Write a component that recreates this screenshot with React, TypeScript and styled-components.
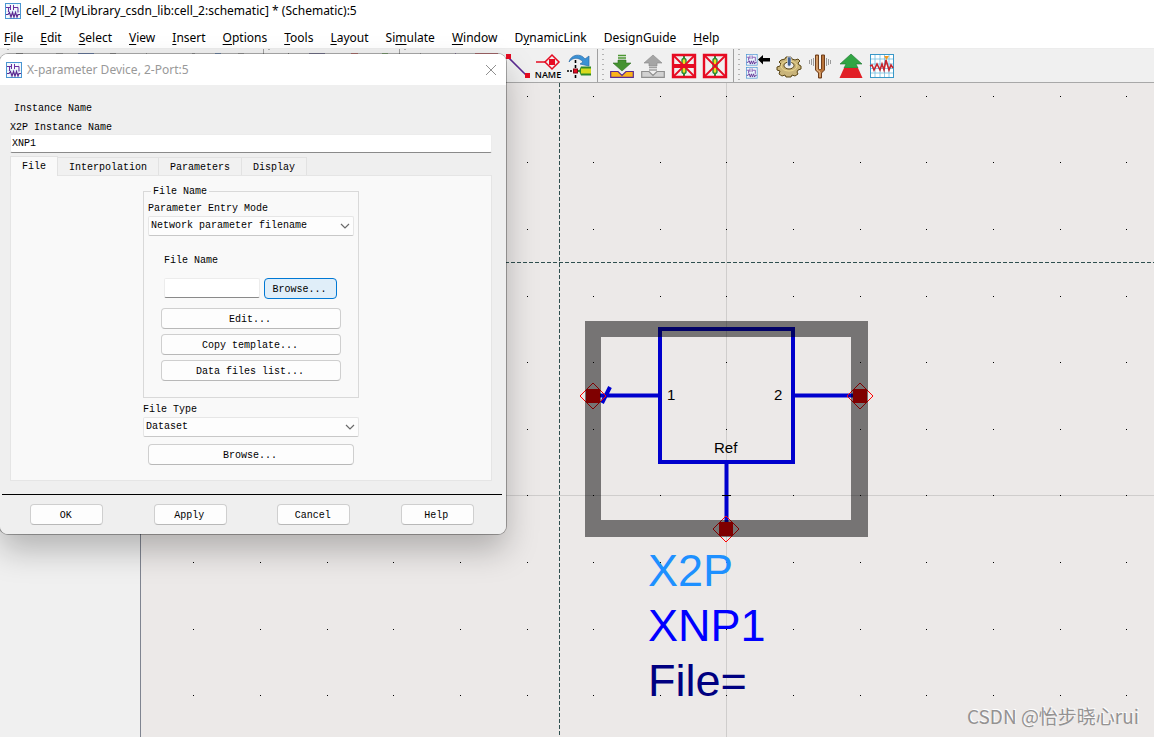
import React, { useState } from "react";
import styled, { createGlobalStyle, css } from "styled-components";

const UI_FONT = '"Noto Sans", "Open Sans", sans-serif';
const FORM_FONT = '"Liberation Mono", monospace';

const GlobalStyle = createGlobalStyle`
  *, *::before, *::after { box-sizing: border-box; }
  body { margin: 0; background: #f0f0f0; color: #000; font-family: ${UI_FONT}; font-size: 12px; }
  button, input, select { font: inherit; color: inherit; margin: 0; }
`;

/* ---------- main window ---------- */

const Window = styled.div`
  position: relative;
  display: flex;
  flex-direction: column;
  min-height: 100vh;
  overflow: hidden;
`;

const TitleBar = styled.header`
  display: flex;
  align-items: center;
  gap: 5px;
  height: 24px;
  padding: 0 5px 3px;
  background: #fff;
`;

const WindowTitle = styled.h1`
  margin: 0;
  font-size: 12px;
  font-weight: 400;
  line-height: 20px;
  white-space: nowrap;
`;

const MenuBar = styled.nav`
  display: flex;
  align-items: center;
  gap: 17px;
  height: 25px;
  padding: 4px 4px 0;
  background: #fff;
  border-bottom: 1px solid #ececec;
`;

const MenuButton = styled.button`
  padding: 0;
  border: 0;
  background: none;
  line-height: 16px;
  white-space: nowrap;

  u { text-underline-offset: 2px; }
`;

const ToolBar = styled.div`
  display: flex;
  height: 34px;
  padding-left: 3px;
  background: #f0f0f0;
  border-bottom: 1px solid #a8a8a8;
`;

const ToolGroup = styled.div<{ $first?: boolean }>`
  display: flex;
  align-items: center;
  gap: 7px;
  padding: 0 6px 0 ${(p) => (p.$first ? 13 : 12)}px;
  border-left: ${(p) => (p.$first ? "0" : "1px solid #a0a0a0")};
  background: radial-gradient(circle, #b4b4b4 1px, transparent 1px) 3px 3px / 4px 5px repeat-y;
`;

const ToolButton = styled.button`
  display: block;
  width: 24px;
  height: 24px;
  padding: 0;
  border: 0;
  background: none;

  svg { display: block; overflow: visible; }
`;

const Workspace = styled.main`
  display: flex;
  flex: 1;
`;

const SidePanel = styled.aside`
  flex: 0 0 141px;
  background: #f0f0f0;
  border-right: 1px solid #7f8490;
`;

const Canvas = styled.section`
  display: flex;
  flex: 1;
  min-width: 0;
  min-height: 600px;
  padding-left: 4px;
  background: #ece9e8;
`;

const Drawing = styled.svg`
  display: block;
  flex: 1;
  min-width: 0;
  font-family: "Liberation Sans", Arial, sans-serif;
`;

const Watermark = styled.div`
  position: absolute;
  right: 15px;
  bottom: 8px;
  font: 400 19px/26px "Noto Sans CJK SC", sans-serif;
  color: #949292;
  text-shadow: 1px -1px 0 #fff;
`;

/* ---------- dialog ---------- */

const Dialog = styled.section`
  position: absolute;
  top: 54px;
  left: 0;
  width: 506px;
  overflow: hidden;
  background: #efefef;
  border-radius: 8px;
  font: 10px/12px ${FORM_FONT};
`;

const DialogShadow = styled.div`
  position: absolute;
  top: 54px;
  left: 0;
  width: 506px;
  height: 480px;
  border-radius: 8px;
  box-shadow: 0 0 0 1px rgba(0, 0, 0, 0.3), 0 16px 32px rgba(0, 0, 0, 0.25);
`;

const DialogHeader = styled.header`
  display: flex;
  align-items: center;
  gap: 5px;
  height: 31px;
  padding: 0 9px 0 6px;
  background: #fff;
`;

const DialogTitle = styled.h2`
  flex: 1;
  margin: 0;
  color: #999;
  font: 400 12px/20px ${UI_FONT};
`;

const CloseButton = styled.button`
  padding: 0;
  border: 0;
  background: none;

  svg { display: block; }
`;

const DialogBody = styled.div`
  padding: 18px 14px 0 10px;
`;

const Caption = styled.p`
  margin: 0 0 7px 4px;
`;

const Label = styled.label`
  display: block;
`;

const fieldSurface = css`
  background: #fff;
  border: 1px solid #ececec;
  border-bottom-color: #8a8a8a;
  border-radius: 2px;
  outline: 0;
`;

const TextInput = styled.input<{ $width?: string }>`
  ${fieldSurface}
  display: block;
  width: ${(p) => p.$width ?? "100%"};
  height: ${(p) => (p.$width ? 20 : 19)}px;
  padding: 0 1px;
`;

const Tabs = styled.div`
  display: flex;
  align-items: flex-end;
  height: 22px;
  padding-top: 3px;
`;

const Tab = styled.button<{ $active?: boolean }>`
  position: relative;
  height: ${(p) => (p.$active ? 20 : 18)}px;
  margin-bottom: ${(p) => (p.$active ? -1 : 0)}px;
  padding: ${(p) => (p.$active ? 0 : 2)}px 11px 0;
  border: 1px solid #e2e2e2;
  border-bottom: 0;
  border-left-width: ${(p) => (p.$active ? 1 : 0)}px;
  background: ${(p) => (p.$active ? "#f9f9f9" : "#f1f1f1")};
`;

const TabPanel = styled.div`
  height: 306px;
  padding: 9px 132px 0;
  background: #f9f9f9;
  border: 1px solid #e5e5e5;
`;

const FileGroup = styled.fieldset`
  min-width: 0;
  height: 213px;
  margin: 0;
  padding: 5px 4px 0;
  border: 1px solid #d9d9d9;
`;

const Legend = styled.legend`
  margin-left: 3px;
  padding: 1px 2px 0;
`;

const SelectBox = styled.div`
  position: relative;
  margin-top: 1px;

  select {
    display: block;
    width: 100%;
    height: 20px;
    padding: 0 20px 0 2px;
    appearance: none;
    background: #fdfdfd;
    border: 1px solid #e6e6e6;
    border-bottom-color: #c8c8c8;
    border-radius: 2px;
  }

  svg {
    position: absolute;
    right: 4px;
    top: 7px;
    pointer-events: none;
  }
`;

const FileNameBlock = styled.div`
  padding: 19px 16px 0;
`;

const FileRow = styled.div`
  display: flex;
  gap: 4px;
  margin-top: 11px;
`;

const PushButton = styled.button<{ $width?: string; $highlight?: boolean }>`
  display: block;
  width: ${(p) => p.$width ?? "100%"};
  height: 21px;
  padding: 3px 2px 0 0;
  border: 1px solid ${(p) => (p.$highlight ? "#0078d4" : "#cfcfcf")};
  border-bottom-color: ${(p) => (p.$highlight ? "#0078d4" : "#b8b8b8")};
  border-radius: 4px;
  background: ${(p) => (p.$highlight ? "#e0eef9" : "#fdfdfd")};
`;

const ButtonStack = styled.div`
  display: grid;
  gap: 5px;
  margin: 9px 13px 0;
`;

const FileTypeBlock = styled.div`
  padding-top: 6px;
`;

const BrowseSlot = styled.div`
  padding: 7px 5px 0;
`;

const Footer = styled.footer`
  display: grid;
  grid-template-columns: repeat(4, 1fr);
  justify-items: center;
  margin: 13px 4px 0 2px;
  padding: 9px 3px;
  border-top: 1px solid #000;
`;

/* ---------- icons ---------- */

const Icon = ({ size = 24, children }: { size?: number; children: React.ReactNode }) => (
  <svg width={size} height={size} viewBox={`0 0 ${size} ${size}`} fill="none" aria-hidden="true">
    {children}
  </svg>
);

const SchematicMark = () => (
  <>
    <rect x=".5" y=".5" width="15" height="15" fill="#f3f8fd" stroke="#4b96d2" />
    <path d="M4.500 1v14M8.500 1v14M12.500 1v14M1 8.500h14" stroke="#dcebf8" />
    <path d="M1 4.500h4M5.500 2v5M8.500 2v5M9 4.500h4v5M3.500 5v4" stroke="#6a2fa0" />
    <path d="M1 11.500h2l1.500-2 1.500 4.500 1.500-4.500 1.500 4.500 1.500-4.500 1.500 4.500 1-2.500h2" stroke="#5b2a91" strokeWidth="1.200" />
  </>
);

const AppIcon = () => (
  <Icon size={16}>
    <SchematicMark />
  </Icon>
);

const WireIcon = () => (
  <Icon>
    <path d="M3 3l18 18" stroke="#5b2a91" strokeWidth="1.600" />
    <path d="M1 0h5v5H1zM20 19h5v5h-5z" fill="#e60b22" />
  </Icon>
);

const NameIcon = () => (
  <Icon>
    <path d="M0 8h9" stroke="#e60b22" strokeWidth="1.500" />
    <path d="M16 1l7 7-7 7-7-7z" stroke="#e60b22" strokeWidth="1.500" />
    <path d="M13 5h6v6h-6z" fill="#e60b22" />
    <text x="12" y="24" textAnchor="middle" fontFamily="Open Sans, sans-serif" fontSize="9" fontWeight="600" fill="#000">
      NAME
    </text>
  </Icon>
);

const RotateIcon = () => (
  <Icon>
    <path d="M2 8C4 0 14-1 18 5l4-3v10l-9-2 3-2C12 3 6 3 2 8z" fill="#3a92d6" stroke="#2b6ca8" strokeWidth=".7" />
    <path d="M8.500 6v18" stroke="#000" strokeWidth="1.600" strokeDasharray="3 2" />
    <path d="M0 17h8" stroke="#000" strokeWidth="1.600" strokeDasharray="2 1" />
    <path d="M9 17h5" stroke="#2a8a35" strokeWidth="2" />
    <rect x="6.500" y="15" width="4" height="4" fill="#e60b22" stroke="#7c0812" />
    <path d="M14 12.500h10v9H14l-2-4.500z" fill="#2f8a28" />
    <path d="M14 14.500h10v5H14z" fill="#d8da1e" />
  </Icon>
);

const TransferIcon = ({ up }: { up?: boolean }) => (
  <Icon>
    {up ? (
      <>
        <path d="M12 1l9 8h-5v3H8V9H3z" fill="#a5a5a5" stroke="#888" strokeWidth=".6" />
        <path d="M8 13.500h8M8 16h8" stroke="#a0a0a0" strokeWidth="1.500" />
      </>
    ) : (
      <>
        <path d="M8 1.500h8M8 4h8" stroke="#4b9632" strokeWidth="1.500" />
        <path d="M8 6h8v3h5l-9 8-9-8h5z" fill="#459230" stroke="#2d6e20" strokeWidth=".6" />
      </>
    )}
    <path
      d="M.700 17.500H8l4 4 4-4h7.300v5.800H.700z"
      fill={up ? "#d2d2d2" : "#fbb31a"}
      stroke={up ? "#8f8f8f" : "#5b2a91"}
      strokeWidth="1.200"
    />
  </Icon>
);

const DeactivateIcon = ({ shorted }: { shorted?: boolean }) => (
  <Icon>
    <path d="M12 2v20" stroke="#2a8a35" strokeWidth="2" />
    <rect x="10" y="4.500" width="4" height="15" rx="2" fill="#f2dd20" stroke="#2a8a35" strokeWidth="1.400" />
    <path d="M1 1h22v22H1z" stroke="#e60b22" strokeWidth="2.400" />
    <path d="M2 2l20 20M22 2L2 22" stroke="#e60b22" strokeWidth="1.800" />
    {shorted && <path d="M1 12h22" stroke="#e60b22" strokeWidth="4" />}
  </Icon>
);

const HierarchyIcon = () => (
  <Icon>
    <g transform="scale(.72)">
      <SchematicMark />
    </g>
    <g transform="translate(0 13) scale(.72)">
      <SchematicMark />
    </g>
    <path d="M12 5.500l5-4.500v3h7v3.500h-7v3z" fill="#000" />
  </Icon>
);

const GearIcon = () => (
  <Icon>
    <path
      d="M8 5l1-2h5l1 2 3 1 3-1 2 2-2 2 1 2 2 1v3l-3 1-1 2 1 2-3 2-3-1-1 2h-5l-1-2-3 1-3-2 1-3-3-1v-3l3-1 1-2-2-2 2-2z"
      fill="#c9b47a"
      stroke="#5a4615"
    />
    <ellipse cx="12" cy="12" rx="8" ry="5" stroke="#ecd88e" />
    <ellipse cx="12" cy="11.500" rx="5" ry="3.500" fill="#eee" stroke="#5a4615" />
    <path d="M10.500 3h3.500v8l-2 1.500-1.500-1.500z" fill="#45628f" stroke="#e8eef6" strokeWidth=".6" />
  </Icon>
);

const TuneIcon = () => (
  <Icon>
    <path d="M7.500 1h3v14h3V1h3v15l-3 3v5h-3v-5l-3-3z" fill="#b9743a" stroke="#6e3e1c" />
    <path d="M9 2v14l3 2v5" stroke="#eac08e" />
    <path d="M11 1h2v14h-2z" fill="#f4f4f4" />
    <path d="M5.500 4v8M3.500 5v6M1.500 6v4M18.500 4v8M20.500 5v6M22.500 6v4" stroke="#9a9a9a" />
  </Icon>
);

const OptimizeIcon = () => (
  <Icon>
    <path d="M12 0l11 10h-6l2 4H5l2-4H1z" fill="#32a544" stroke="#1d7430" strokeWidth=".6" />
    <path d="M5 14h14l4.500 10H.500z" fill="#e11f26" />
  </Icon>
);

const DataDisplayIcon = () => (
  <Icon>
    <rect x=".5" y=".5" width="23" height="23" fill="#fff" stroke="#3998c8" />
    <path d="M5 1v22M10 1v22M14.500 1v22M19 1v22M1 5h22M1 10h22M1 14.500h22M1 19h22" stroke="#70bedf" strokeWidth=".8" />
    <path d="M0 12l2-1 2 5 3-6 3 6 2-6 2 6 2-10 3 10 2-5 2 3" stroke="#c5242c" strokeWidth="1.600" />
    <path d="M14 2h5l-2.500 4z" fill="#f39b21" />
  </Icon>
);

const CrossIcon = () => (
  <Icon size={12}>
    <path d="M1 1l10 10M11 1L1 11" stroke="#909090" />
  </Icon>
);

const Chevron = () => (
  <svg width="10" height="6" viewBox="0 0 10 6" fill="none" aria-hidden="true">
    <path d="M1 1l4 4 4-4" stroke="#6a6a6a" strokeWidth="1.200" />
  </svg>
);

const SheetIcon = ({ x, width, color }: { x: number; width: number; color: string }) => (
  <Icon>
    <path d={`M${x} 0h${width}v22h-${width}z`} fill="#fff" stroke={color} />
  </Icon>
);

/* ---------- data ---------- */

const menus = [
  ["", "F", "ile"],
  ["", "E", "dit"],
  ["", "S", "elect"],
  ["", "V", "iew"],
  ["", "I", "nsert"],
  ["", "O", "ptions"],
  ["", "T", "ools"],
  ["", "L", "ayout"],
  ["Si", "m", "ulate"],
  ["", "W", "indow"],
  ["D", "y", "namicLink"],
  ["DesignGuide", "", ""],
  ["", "H", "elp"],
];

type Tool = { name: string; icon: React.ReactNode };

const sheet = (name: string, x: number, width: number, color: string): Tool => ({
  name,
  icon: <SheetIcon x={x} width={width} color={color} />,
});

const toolGroups: Tool[][] = [
  [
    sheet("New", 0, 7, "#555"),
    sheet("Open", 9, 7, "#888"),
    sheet("Save", 0, 16, "#1f4fa8"),
    sheet("Print", 1, 6, "#666"),
    sheet("Select", 6, 1, "#777"),
    sheet("Delete", 21, 3, "#777"),
    sheet("Undo", 13, 6, "#2862b0"),
    sheet("Redo", 5, 6, "#888"),
  ],
  [
    sheet("Zoom area", 12, 1, "#333"),
    sheet("Zoom to fit", 2, 16, "#3c3a78"),
    sheet("Zoom in", 13, 7, "#c8322d"),
    sheet("Zoom out", 13, 6, "#4d9a35"),
  ],
  [
    sheet("Port", 8, 1, "#777"),
    sheet("Ground", 12, 1, "#5b2a91"),
    sheet("Variable", 1, 23, "#c5242c"),
    { name: "Insert wire", icon: <WireIcon /> },
    { name: "Insert wire label", icon: <NameIcon /> },
    { name: "Rotate", icon: <RotateIcon /> },
  ],
  [
    { name: "Push into hierarchy", icon: <TransferIcon /> },
    { name: "Pop out of hierarchy", icon: <TransferIcon up /> },
    { name: "Deactivate and short", icon: <DeactivateIcon shorted /> },
    { name: "Deactivate", icon: <DeactivateIcon /> },
  ],
  [
    { name: "Choose hierarchy", icon: <HierarchyIcon /> },
    { name: "Simulate", icon: <GearIcon /> },
    { name: "Tune parameters", icon: <TuneIcon /> },
    { name: "Optimize", icon: <OptimizeIcon /> },
    { name: "Data display", icon: <DataDisplayIcon /> },
  ],
];

/* ---------- schematic ---------- */

const GRID = 66.65;
const range = (from: number, to: number) => Array.from({ length: to - from + 1 }, (_, i) => from + i);
const gridDots = range(-8, 30).flatMap((i) =>
  range(-6, 20).map((j) => `M${Math.ceil(i * GRID)} ${Math.ceil(j * GRID)}h1v1h-1z`)
);

const Pin = ({ x, y }: { x: number; y: number }) => (
  <g transform={`translate(${x} ${y})`}>
    <path d="M-7-7H7V7H-7z" fill="#f00" />
    <path d="M0-13L13 0 0 13-13 0z" fill="none" stroke="#f00" />
  </g>
);

/* The drawing's origin is the crossing of the two solid axis lines. */
const Schematic = () => (
  <Drawing role="img" aria-label="Schematic with X2P instance XNP1">
    <g transform="translate(581 412)">
      <path d="M.5-412V4000M-581 .5H4000" stroke="#cfcdcc" />
      <path d="M-166.500-412V4000M-581-232.500H4000" stroke="#2f4f4f" strokeDasharray="4 2" />
      <path d={gridDots.join("")} fill="#000" />

      <g stroke="#0000cd" strokeWidth="4" fill="none">
        <path d="M-66-166H67V-33H-66zM-133-99.500H-66M67-99.500H133M.5-33V34M-116-108L-124-92" />
      </g>
      <path d="M-4 .5H5" stroke="#000" />
      <Pin x={-133} y={-99} />
      <Pin x={134} y={-99} />
      <Pin x={0} y={34} />
      <path d="M-141-174H142V42H-141zM-125-158V25H125V-158z" fillRule="evenodd" fillOpacity=".5" />

      <g fontSize="15">
        <text x="-59" y="-95">1</text>
        <text x="48" y="-95">2</text>
        <text x="-12" y="-42">Ref</text>
      </g>
      <g fontSize="45">
        <text x="-78" y="91" fill="#1e90ff">X2P</text>
        <text x="-78" y="146" fill="#0000ff">XNP1</text>
        <text x="-78" y="201" fill="#000080">File=</text>
      </g>
    </g>
  </Drawing>
);

/* ---------- dialog ---------- */

const ParameterDialog = () => {
  const [instance, setInstance] = useState("XNP1");
  const [file, setFile] = useState("");

  return (
    <Dialog role="dialog" aria-labelledby="dialog-title">
      <DialogHeader>
        <AppIcon />
        <DialogTitle id="dialog-title">X-parameter Device, 2-Port:5</DialogTitle>
        <CloseButton aria-label="Close">
          <CrossIcon />
        </CloseButton>
      </DialogHeader>
      <DialogBody>
        <Caption>Instance Name</Caption>
        <Label htmlFor="instance">X2P Instance Name</Label>
        <TextInput id="instance" value={instance} onChange={(e) => setInstance(e.target.value)} />
        <Tabs role="tablist">
          <Tab role="tab" aria-selected $active>File</Tab>
          <Tab role="tab">Interpolation</Tab>
          <Tab role="tab">Parameters</Tab>
          <Tab role="tab">Display</Tab>
        </Tabs>
        <TabPanel role="tabpanel">
          <FileGroup>
            <Legend>File Name</Legend>
            <Label htmlFor="mode">Parameter Entry Mode</Label>
            <SelectBox>
              <select id="mode">
                <option>Network parameter filename</option>
              </select>
              <Chevron />
            </SelectBox>
            <FileNameBlock>
              <Label htmlFor="file">File Name</Label>
              <FileRow>
                <TextInput id="file" $width="96px" value={file} onChange={(e) => setFile(e.target.value)} />
                <PushButton $width="73px" $highlight>Browse...</PushButton>
              </FileRow>
            </FileNameBlock>
            <ButtonStack>
              <PushButton>Edit...</PushButton>
              <PushButton>Copy template...</PushButton>
              <PushButton>Data files list...</PushButton>
            </ButtonStack>
          </FileGroup>
          <FileTypeBlock>
            <Label htmlFor="type">File Type</Label>
            <SelectBox>
              <select id="type">
                <option>Dataset</option>
              </select>
              <Chevron />
            </SelectBox>
            <BrowseSlot>
              <PushButton>Browse...</PushButton>
            </BrowseSlot>
          </FileTypeBlock>
        </TabPanel>
      </DialogBody>
      <Footer>
        {["OK", "Apply", "Cancel", "Help"].map((name) => (
          <PushButton key={name} $width="73px">{name}</PushButton>
        ))}
      </Footer>
    </Dialog>
  );
};

export default function App() {
  return (
    <>
      <GlobalStyle />
      <Window>
        <TitleBar>
          <AppIcon />
          <WindowTitle>cell_2 [MyLibrary_csdn_lib:cell_2:schematic] * (Schematic):5</WindowTitle>
        </TitleBar>
        <MenuBar aria-label="Main menu">
          {menus.map(([before, key, after]) => (
            <MenuButton key={before + key + after}>
              {before}
              {key && <u>{key}</u>}
              {after}
            </MenuButton>
          ))}
        </MenuBar>
        <ToolBar role="toolbar" aria-label="Schematic tools">
          {toolGroups.map((group, i) => (
            <ToolGroup key={i} $first={i === 0}>
              {group.map((tool) => (
                <ToolButton key={tool.name} aria-label={tool.name}>
                  {tool.icon}
                </ToolButton>
              ))}
            </ToolGroup>
          ))}
        </ToolBar>
        <Workspace>
          <SidePanel />
          <Canvas>
            <Schematic />
          </Canvas>
        </Workspace>
        <Watermark>CSDN @怡步晓心rui</Watermark>
        <DialogShadow />
        <ParameterDialog />
      </Window>
    </>
  );
}
